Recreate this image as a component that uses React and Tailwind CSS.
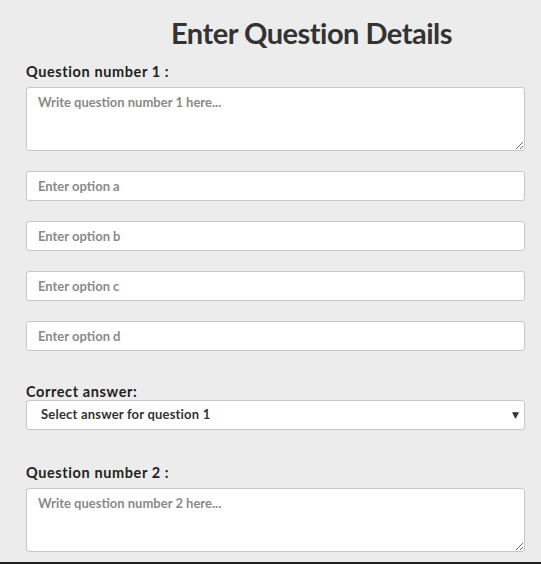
import React from 'react';

const FONT = { fontFamily: 'Lato, "DejaVu Sans", sans-serif' };

function Label({ children, className = '' }) {
  return (
    <label className={`block text-[14.5px] font-bold text-[#222] leading-4 tracking-[0.6px] ${className}`}>
      {children}
    </label>
  );
}

const field =
  'block w-full bg-white border border-[#c8c8c8] rounded-[3px] text-[13px] font-bold placeholder:text-[#8a8a8a] outline-none';

function Option({ letter }) {
  return (
    <input
      type="text"
      placeholder={`Enter option ${letter}`}
      className={`${field} h-[30px] mt-[20px] px-[11px]`}
    />
  );
}

function Question({ n, className = '' }) {
  return (
    <div className={className}>
      <Label>Question number {n} :</Label>
      <textarea
        placeholder={`Write question number ${n} here...`}
        className={`${field} h-[64px] mt-[7px] px-[11px] py-[5px]`}
      />
    </div>
  );
}

export default function App() {
  return (
    <div className="w-[541px] h-[564px] bg-[#ececec] flex flex-col overflow-hidden" style={FONT}>
      <div className="flex-1 px-[26px] pr-[16px]">
        <h1 className="pt-[15px] pl-[145px] text-[29px] font-bold text-[#333] leading-9 tracking-[-0.5px]">
          Enter Question Details
        </h1>
        <Question n={1} className="mt-[13px]" />
        <Option letter="a" />
        <Option letter="b" />
        <Option letter="c" />
        <Option letter="d" />
        <Label className="mt-[33px]">Correct answer:</Label>
        <div className="relative">
          <select className={`${field} h-[30px] pl-[14px] pr-6 text-[#333] tracking-[0.2px] appearance-none`}>
            <option>Select answer for question 1</option>
          </select>
          <span className="absolute right-[6px] top-[8px] text-[9px] text-[#333] pointer-events-none">▼</span>
        </div>
        <Question n={2} className="mt-[35px]" />
      </div>
      <div className="h-[2px] bg-[#1e1e1e]" />
    </div>
  );
}
